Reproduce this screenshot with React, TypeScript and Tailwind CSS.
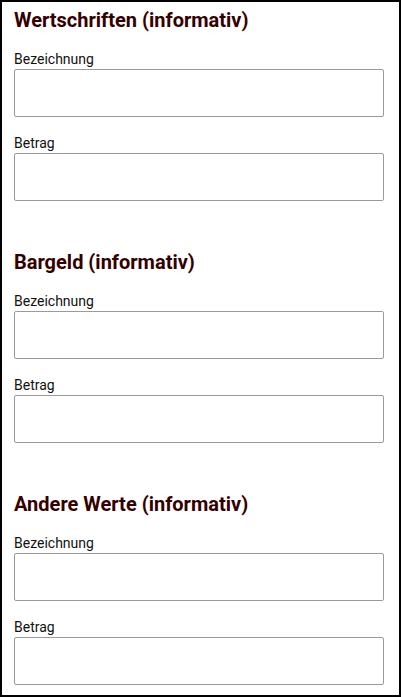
import React from "react";

function Field({ label }: { label: string }) {
  return (
    <div className="flex flex-col">
      <label className="text-[14px] leading-[20px] text-[#111111]">{label}</label>
      <input
        type="text"
        className="h-[48px] w-full rounded-[2px] border border-[#9a9a9a] bg-white outline-none"
      />
    </div>
  );
}

function Section({ title, last }: { title: string; last?: boolean }) {
  return (
    <section className={last ? "" : "mb-[49px]"}>
      <h2 className="mb-[17px] text-[20px] font-bold leading-[24px] text-[#330000]">{title}</h2>
      <div className="flex flex-col gap-[16px]">
        <Field label="Bezeichnung" />
        <Field label="Betrag" />
      </div>
    </section>
  );
}

export default function App() {
  return (
    <div
      className="box-border h-[697px] w-[401px] overflow-hidden border-2 border-black bg-white pl-[12px] pr-[15px] pt-[6px]"
      style={{ fontFamily: "Roboto, 'Liberation Sans', sans-serif" }}
    >
      <Section title="Wertschriften (informativ)" />
      <Section title="Bargeld (informativ)" />
      <Section title="Andere Werte (informativ)" last />
    </div>
  );
}
